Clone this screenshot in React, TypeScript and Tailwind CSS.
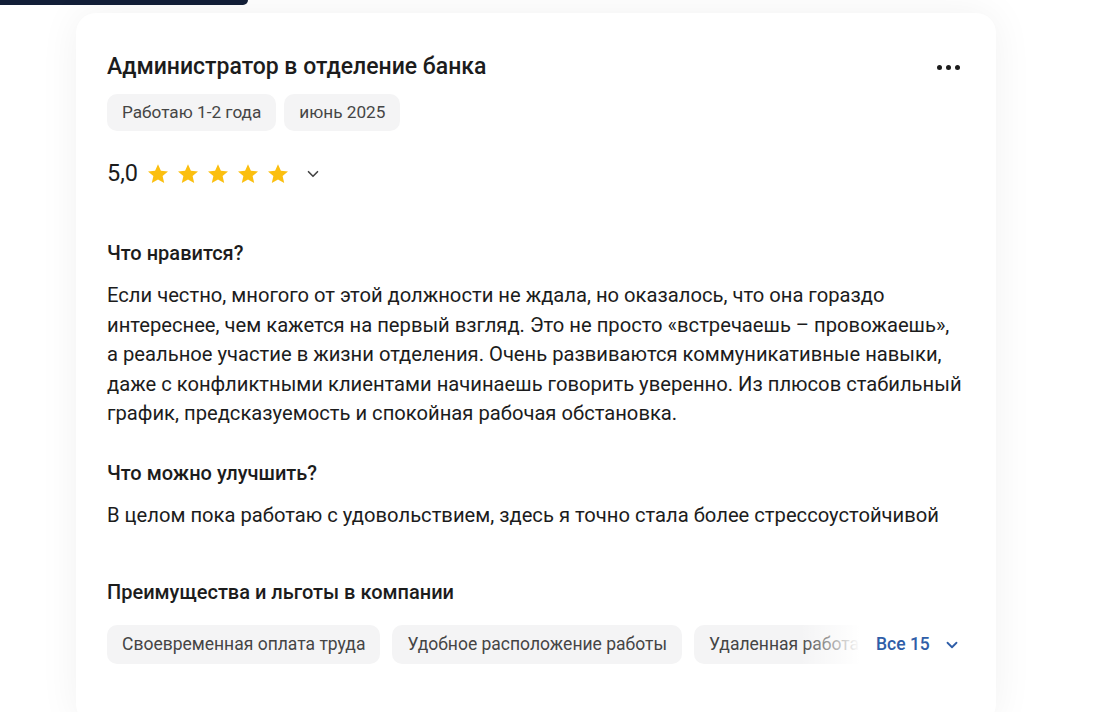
import { ChevronDown } from "lucide-react"

const benefits = ["Своевременная оплата труда", "Удобное расположение работы", "Удаленная работа"]

function Star() {
  return (
    <svg viewBox="0 0 24 24" className="h-[24px] w-[24px]" fill="#fbbf0f">
      <path d="M12 2.2l2.9 6.6 7.1.6-5.4 4.7 1.6 7-6.2-3.7-6.2 3.7 1.6-7L2 9.4l7.1-.6z" />
    </svg>
  )
}

function Chip({ children, big }: { children: React.ReactNode; big?: boolean }) {
  return (
    <span
      className={
        big
          ? "shrink-0 whitespace-nowrap rounded-[10px] bg-[#f4f4f5] px-[15px] h-[39px] flex items-center text-[17.5px] text-[#454545]"
          : "shrink-0 whitespace-nowrap rounded-[10px] bg-[#f4f4f5] px-[15px] h-[37px] flex items-center text-[17.2px] text-[#454545]"
      }
    >
      {children}
    </span>
  )
}

export default function App() {
  return (
    <div className="min-h-[712px] bg-white font-['Roboto',sans-serif] text-[#1c1c1c] overflow-hidden">
      <div className="h-[5px] w-[248px] rounded-br-[14px] bg-[#131f38]" />
      <div className="ml-[76px] mt-[8px] w-[920px] rounded-[20px] bg-white px-[31px] pt-[39px] pb-[60px] shadow-[0_0_40px_rgba(0,0,0,0.06)]">
        <div className="flex items-center justify-between">
          <h1 className="text-[23px] leading-[30px] font-medium">Администратор в отделение банка</h1>
          <div className="mr-[5px] flex gap-[4px]">
            <span className="h-[5px] w-[5px] rounded-full bg-[#1c1c1c]" />
            <span className="h-[5px] w-[5px] rounded-full bg-[#1c1c1c]" />
            <span className="h-[5px] w-[5px] rounded-full bg-[#1c1c1c]" />
          </div>
        </div>
        <div className="mt-[12px] flex gap-[8px]">
          <Chip>Работаю 1-2 года</Chip>
          <Chip>июнь 2025</Chip>
        </div>
        <div className="mt-[28px] flex h-[30px] items-center">
          <span className="text-[23.5px] font-normal">5,0</span>
          <div className="ml-[8px] flex gap-[6px]">
            <Star />
            <Star />
            <Star />
            <Star />
            <Star />
          </div>
          <ChevronDown className="ml-[14px] h-[18px] w-[18px] text-[#444]" strokeWidth={2.2} />
        </div>

        <h2 className="mt-[51px] text-[20px] leading-[26px] font-medium">Что нравится?</h2>
        <p className="mt-[15px] text-[20.2px] leading-[29.5px]">
          Если честно, многого от этой должности не ждала, но оказалось, что она гораздо интереснее, чем кажется на
          первый взгляд. Это не просто «встречаешь – провожаешь», а реальное участие в жизни отделения. Очень
          развиваются коммуникативные навыки, даже с конфликтными клиентами начинаешь говорить уверенно. Из плюсов
          стабильный график, предсказуемость и спокойная рабочая обстановка.
        </p>

        <h2 className="mt-[31px] text-[20px] leading-[26px] font-medium">Что можно улучшить?</h2>
        <p className="mt-[15px] text-[20.2px] leading-[29.5px]">
          В целом пока работаю с удовольствием, здесь я точно стала более стрессоустойчивой
        </p>

        <h2 className="mt-[49px] text-[20px] leading-[26px] font-medium">Преимущества и льготы в компании</h2>
        <div className="mt-[20px] flex items-center">
          <div className="relative w-[753px] overflow-hidden">
            <div className="flex gap-[12px]">
              {benefits.map((b) => (
                <Chip key={b} big>
                  {b}
                </Chip>
              ))}
            </div>
            <div className="absolute right-0 top-0 h-full w-[60px] bg-gradient-to-r from-white/0 to-white" />
          </div>
          <button className="ml-[16px] flex items-center text-[17.5px] font-medium text-[#2f5ea8]">
            Все 15
            <ChevronDown className="ml-[13px] h-[18px] w-[18px]" strokeWidth={2.4} />
          </button>
        </div>
      </div>
    </div>
  )
}
